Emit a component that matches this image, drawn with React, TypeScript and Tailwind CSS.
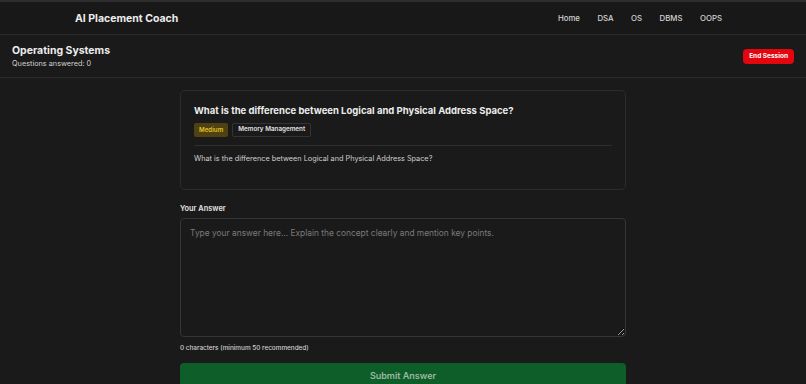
export default function App() {
  const links = ["Home", "DSA", "OS", "DBMS", "OOPS"];
  return (
    <div className="min-h-screen bg-[#1a1a1a] text-[#e5e5e5] font-['Inter',sans-serif] border-t-2 border-[#2e2e2e]">
      {/* Top nav */}
      <header className="h-[33px] flex items-center justify-between pl-[75px] pr-[84px] border-b border-[#2a2a2a] bg-[#181818]">
        <span className="text-[10.5px] font-bold text-[#ececec] leading-[14px] mt-[1px]">AI Placement Coach</span>
        <nav className="flex gap-[17.5px] text-[7.8px] font-medium text-[#d4d4d4] mt-[1px]">
          {links.map((l) => (
            <a key={l}>{l}</a>
          ))}
        </nav>
      </header>

      {/* Session bar */}
      <div className="h-[43px] flex items-center justify-between px-3 border-b border-[#2a2a2a]">
        <div className="flex flex-col mt-[1px]">
          <span className="text-[10.5px] font-bold text-[#ececec] leading-[14px]">Operating Systems</span>
          <span className="text-[7.3px] text-[#cfcfcf] leading-[11px]">Questions answered: 0</span>
        </div>
        <button className="h-[15px] px-[6px] rounded-[4px] bg-[#e3060f] text-white text-[6.5px] font-bold mt-[1px]">
          End Session
        </button>
      </div>

      <main className="w-[446px] mx-auto pt-[12px]">
        <section className="rounded-[5px] border border-[#2c2c2c] px-[13px] pt-[13px] pb-[25px]">
          <h2 className="text-[9.5px] font-bold text-[#ececec] leading-[13px]">
            What is the difference between Logical and Physical Address Space?
          </h2>
          <div className="flex gap-[4px] mt-[6px]">
            <span className="h-[14px] px-[5px] flex items-center rounded-[2px] bg-[#4f4112] text-[#e0c22c] text-[6.2px] font-semibold">
              Medium
            </span>
            <span className="h-[14px] px-[5px] flex items-center rounded-[2px] border border-[#333] text-[#e0e0e0] text-[6.3px] font-semibold">
              Memory Management
            </span>
          </div>
          <div className="border-t border-[#2e2e2e] mt-[8px] pt-[7px] text-[7.3px] text-[#d0d0d0] leading-[11px]">
            What is the difference between Logical and Physical Address Space?
          </div>
        </section>

        <label className="block mt-[13px] text-[7.4px] font-semibold text-[#e5e5e5] leading-[11px]">Your Answer</label>
        <textarea
          className="mt-[4px] block w-full h-[119px] rounded-[4px] border border-[#353535] bg-[#1a1a1a] px-[9px] py-[8px] text-[8.4px] text-[#e5e5e5] placeholder:text-[#7a7a7a] outline-none resize-y"
          placeholder="Type your answer here... Explain the concept clearly and mention key points."
        />
        <p className="mt-[6px] text-[6.4px] text-[#d0d0d0] font-medium leading-[10px]">0 characters (minimum 50 recommended)</p>
        <button className="mt-[10px] w-full h-[26px] rounded-[4px] bg-[#0e5e2a] text-[#9cb8a2] text-[9px] font-semibold">
          Submit Answer
        </button>
      </main>
    </div>
  );
}
